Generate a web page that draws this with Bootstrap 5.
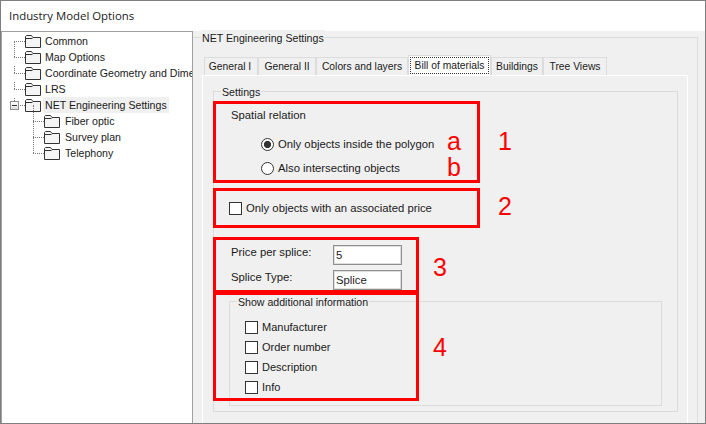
<!DOCTYPE html>
<html lang="en">
<head>
  <meta charset="UTF-8">
  <meta name="viewport" content="width=device-width, initial-scale=1.0">
  <title>Industry Model Options</title>
  <link rel="stylesheet" href="https://cdn.jsdelivr.net/npm/bootstrap@5.3.0/dist/css/bootstrap.min.css">
  <style>
    body { margin: 0; background: #f0f0f0; font: 11.3px/16px "Liberation Sans", Arial, sans-serif; color: #1a1a1a; }
    .win { width: 706px; height: 424px; border: 1px solid #7f7f7f; overflow: hidden; position: relative; }
    .win-title { height: 30px; background: #fff; padding-left: 8px; font: 11.4px/30px "Open Sans", sans-serif; }
    .win-main { height: 392px; }

    /* tree */
    .tree-pane { width: 192px; background: #fff; border: 1px solid #a0a0a0; border-width: 1px 1px 0 1px; padding-top: 1px; flex: none; font-size: 10.6px; }
    .tree-row { height: 16px; position: relative; padding-left: 23px; gap: 4px; white-space: nowrap; overflow: hidden; }
    .tree-row.sub { padding-left: 42px; gap: 5px; overflow: visible; }
    .tree-row::before { content: ""; position: absolute; left: 12px; top: 8px; width: 11px; border-top: 1px dotted #777; }
    .tree-row::after { content: ""; position: absolute; left: 12px; top: -8px; height: 16px; border-left: 1px dotted #777; }
    .tree-row:first-child::after { top: 8px; height: 8px; }
    .tree-row.sub::before { left: 31px; }
    .tree-row.sub::after { left: 31px; }
    .tree-sel { background: #f0f0f0; padding: 0 2px; margin-left: -2px; }
    .expander { position: absolute; left: 8px; top: 4px; width: 9px; height: 9px; border: 1px solid #8e8f8f; background: linear-gradient(#fff, #ddd); z-index: 1; }
    .expander::after { content: ""; position: absolute; left: 1px; top: 3px; width: 5px; border-top: 1px solid #333; }
    .folder { width: 16px; height: 13px; flex: none; }

    /* group boxes */
    .opt-pane { background: #f0f0f0; min-width: 0; }
    .grp { border: 1px solid #dcdcdc; position: relative; }
    .grp-title { position: absolute; top: -8px; left: 7px; background: #f0f0f0; padding: 0 1px; font-size: 10.6px; }
    .grp-outer { margin: 6px 7px 0 0; height: 420px; padding: 17px 9px 0 8px; border-left-color: transparent; }
    .grp-settings { height: 321px; }
    .grp-extra { height: 105px; margin: 11px 15px 0 15px; padding: 15px 0 0 15px; }

    /* tabs */
    .nav-tabs.opt-tabs { height: 20px; border: 0; margin-left: 2px; align-items: flex-end; flex-wrap: nowrap; }
    .opt-tabs .nav-link { height: 18px; padding: 0; margin: 0; color: #1a1a1a; font-size: 10.3px; line-height: 18px; text-align: center; border: 1px solid #dcdcdc; border-bottom: 0; border-radius: 0; background: #f0f0f0; white-space: nowrap; }
    .opt-tabs .nav-item:nth-child(1) .nav-link { width: 54px; padding-right: 2px; }
    .opt-tabs .nav-item:nth-child(2) .nav-link { width: 58px; }
    .opt-tabs .nav-item:nth-child(3) .nav-link { width: 92px; }
    .opt-tabs .nav-item:nth-child(5) .nav-link { width: 52px; }
    .opt-tabs .nav-item:nth-child(6) .nav-link { width: 64px; }
    .opt-tabs .nav-link.active { width: 83px; height: 20px; padding: 1px 1px; margin: 0; border-color: #dcdcdc; border-width: 1px 1px 0 1px; background: #fff; color: #1a1a1a; line-height: 15px; }
    .tab-focus { display: block; border: 1px dotted #333; }
    .tab-body { border: 1px solid #fff; height: 400px; padding: 15px 9px 0 10px; }

    /* form rows */
    .opt-row { height: 16px; gap: 4px; }
    .opt-row .form-check-input { width: 13px; height: 13px; margin: 0; flex: none; border: 1px solid #333; background-color: #fff; box-shadow: none; }
    .opt-row input[type=checkbox] { border-radius: 0; }
    .opt-row input[type=radio]:checked { background-image: radial-gradient(circle at center, #333 3.4px, #fff 3.8px); border-color: #333; }
    .spatial-title { margin: 15px 0 0 17px; }
    .r1 { margin: 13px 0 0 47px; }
    .r2 { margin: 8px 0 0 47px; }
    .price-check { margin: 24px 0 0 15px; }
    .field-row { height: 20px; margin-left: 17px; }
    .field-row label { width: 102px; line-height: 14px; }
    .f1 { margin-top: 29px; }
    .f2 { margin-top: 5px; }
    .form-control.splice-input { width: 69px; height: 20px; padding: 1px 2px; border: 1px solid #8f8f8f; border-radius: 0; font-size: 11.3px; line-height: 16px; color: #1a1a1a; box-shadow: inset 0 0 0 1px #dedede; }
    .extra-row { height: 20px; align-items: center; font-size: 11px; }

    /* red annotations */
    .anno-box { position: absolute; border: 3px solid #f00; pointer-events: none; }
    .b1 { left: 212px; top: 100px; width: 267px; height: 82px; }
    .b2 { left: 212px; top: 187px; width: 267px; height: 40px; }
    .b3 { left: 212px; top: 236px; width: 206px; height: 56px; }
    .b4 { left: 212px; top: 291px; width: 206px; height: 109px; }
    .anno-tag { position: absolute; color: #f00; font: 25px/28px "Liberation Sans", Arial, sans-serif; }
    .ta { left: 446px; top: 126px; }
    .tb { left: 446px; top: 152px; }
    .t1 { left: 497px; top: 126px; }
    .t2 { left: 497px; top: 191px; }
    .t3 { left: 432px; top: 252px; }
    .t4 { left: 432px; top: 332px; }
  </style>
</head>
<body>
<svg width="0" height="0" class="position-absolute">
  <symbol id="folderIco" viewBox="0 0 16 13">
    <path d="M.5 12.5V1.5L1.5.5h5l1.5 2h7.5v10z" fill="#f4f4f4" stroke="#333"/>
    <path d="M1 3.5h6.5" stroke="#333" fill="none"/>
  </symbol>
</svg>

<div class="win">
  <div class="win-title">Industry Model Options</div>

  <div class="win-main d-flex">
    <!-- Arbol -->
    <div class="tree-pane">
      <div class="tree-row d-flex align-items-center"><svg class="folder"><use href="#folderIco"/></svg><span>Common</span></div>
      <div class="tree-row d-flex align-items-center"><svg class="folder"><use href="#folderIco"/></svg><span>Map Options</span></div>
      <div class="tree-row d-flex align-items-center"><svg class="folder"><use href="#folderIco"/></svg><span>Coordinate Geometry and Dimensions</span></div>
      <div class="tree-row d-flex align-items-center"><svg class="folder"><use href="#folderIco"/></svg><span>LRS</span></div>
      <div class="tree-row d-flex align-items-center"><span class="expander"></span><svg class="folder"><use href="#folderIco"/></svg><span class="tree-sel">NET Engineering Settings</span></div>
      <div class="tree-row sub d-flex align-items-center"><svg class="folder"><use href="#folderIco"/></svg><span>Fiber optic</span></div>
      <div class="tree-row sub d-flex align-items-center"><svg class="folder"><use href="#folderIco"/></svg><span>Survey plan</span></div>
      <div class="tree-row sub d-flex align-items-center"><svg class="folder"><use href="#folderIco"/></svg><span>Telephony</span></div>
    </div>

    <!-- Opciones -->
    <div class="opt-pane flex-grow-1">
      <div class="grp grp-outer">
        <span class="grp-title">NET Engineering Settings</span>
        <ul class="nav nav-tabs opt-tabs">
          <li class="nav-item"><a class="nav-link" href="#">General I</a></li>
          <li class="nav-item"><a class="nav-link" href="#">General II</a></li>
          <li class="nav-item"><a class="nav-link" href="#">Colors and layers</a></li>
          <li class="nav-item"><a class="nav-link active" href="#"><span class="tab-focus">Bill of materials</span></a></li>
          <li class="nav-item"><a class="nav-link" href="#">Buildings</a></li>
          <li class="nav-item"><a class="nav-link" href="#">Tree Views</a></li>
        </ul>
        <div class="tab-body">
          <div class="grp grp-settings">
            <span class="grp-title">Settings</span>
            <div class="spatial-title">Spatial relation</div>
            <div class="opt-row r1 d-flex align-items-center">
              <input class="form-check-input" type="radio" name="spatial" id="inside" checked>
              <label for="inside">Only objects inside the polygon</label>
            </div>
            <div class="opt-row r2 d-flex align-items-center">
              <input class="form-check-input" type="radio" name="spatial" id="intersect">
              <label for="intersect">Also intersecting objects</label>
            </div>
            <div class="opt-row price-check d-flex align-items-center">
              <input class="form-check-input" type="checkbox" id="withPrice">
              <label for="withPrice">Only objects with an associated price</label>
            </div>
            <div class="field-row f1 d-flex">
              <label for="price">Price per splice:</label>
              <input class="form-control splice-input" id="price" value="5">
            </div>
            <div class="field-row f2 d-flex">
              <label for="spliceType">Splice Type:</label>
              <input class="form-control splice-input" id="spliceType" value="Splice">
            </div>
            <div class="grp grp-extra">
              <span class="grp-title">Show additional information</span>
              <div class="opt-row extra-row d-flex"><input class="form-check-input" type="checkbox" id="c1"><label for="c1">Manufacturer</label></div>
              <div class="opt-row extra-row d-flex"><input class="form-check-input" type="checkbox" id="c2"><label for="c2">Order number</label></div>
              <div class="opt-row extra-row d-flex"><input class="form-check-input" type="checkbox" id="c3"><label for="c3">Description</label></div>
              <div class="opt-row extra-row d-flex"><input class="form-check-input" type="checkbox" id="c4"><label for="c4">Info</label></div>
            </div>
          </div>
        </div>
      </div>
    </div>
  </div>

  <!-- Anotaciones rojas -->
  <div class="anno-box b1"></div>
  <div class="anno-box b2"></div>
  <div class="anno-box b3"></div>
  <div class="anno-box b4"></div>
  <span class="anno-tag ta">a</span>
  <span class="anno-tag tb">b</span>
  <span class="anno-tag t1">1</span>
  <span class="anno-tag t2">2</span>
  <span class="anno-tag t3">3</span>
  <span class="anno-tag t4">4</span>
</div>
</body>
</html>
